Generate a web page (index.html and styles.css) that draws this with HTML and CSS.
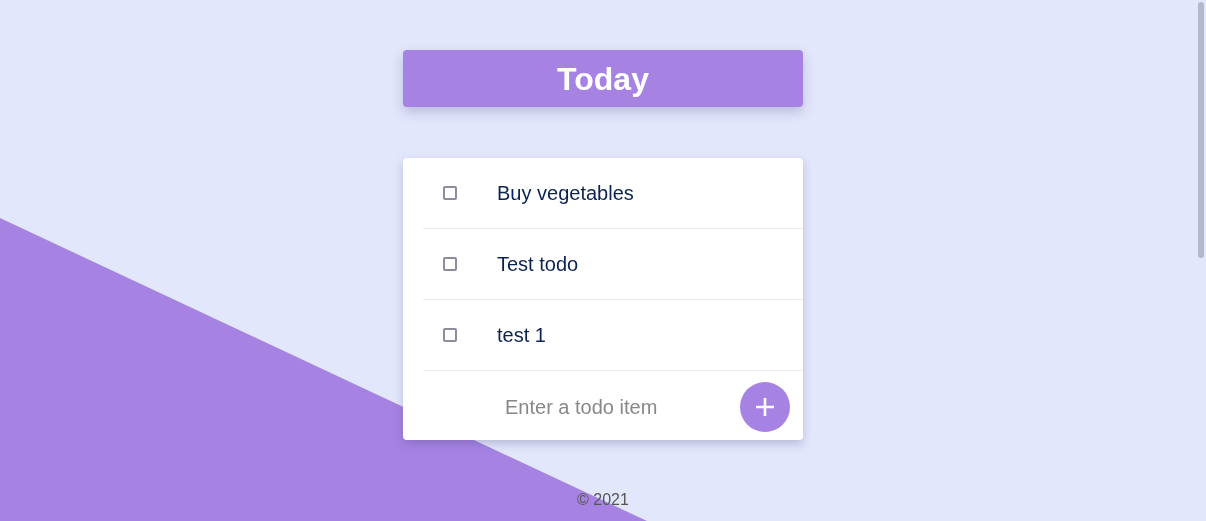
FILE: index.html
```html
<!DOCTYPE html>
<html lang="en">
<head>
<meta charset="utf-8">
<title>Today</title>
<link rel="stylesheet" href="styles.css">
</head>
<body>
<div class="bg-slant"></div>
<main class="app">
  <header class="title-box"><h1 class="title">Today</h1></header>
  <section class="card">
    <ul class="todo-list">
      <li class="todo-item"><span class="check"></span><span class="todo-text">Buy vegetables</span></li>
      <li class="todo-item"><span class="check"></span><span class="todo-text">Test todo</span></li>
      <li class="todo-item"><span class="check"></span><span class="todo-text">test 1</span></li>
    </ul>
    <form class="add-row">
      <input class="todo-input" type="text" placeholder="Enter a todo item">
      <button class="add-btn" type="button" aria-label="Add">
        <svg width="18" height="18" viewBox="0 0 18 18"><path d="M9 0v18M0 9h18" stroke="#fff" stroke-width="2.6" fill="none"/></svg>
      </button>
    </form>
  </section>
  <footer class="footer">© 2021</footer>
</main>
<div class="scroll-thumb"></div>
</body>
</html>
```

FILE: styles.css
```css
html {
  background: #e3e7fc;
}
body {
  margin: 0;
  font-family: "Liberation Sans", Arial, sans-serif;
  color: #0c2352;
}
.bg-slant {
  position: fixed;
  left: 0;
  top: 0;
  width: 100vw;
  height: 100vh;
  background: #a683e3;
  clip-path: polygon(0 41.84%, 53.65% 100%, 0 100%);
  z-index: 0;
}
.scroll-thumb {
  position: fixed;
  top: 2px;
  right: 2px;
  width: 6px;
  height: 256px;
  border-radius: 3px;
  background: #b5b7cb;
  z-index: 2;
}
.app {
  position: relative;
  z-index: 1;
  display: flex;
  flex-direction: column;
  align-items: center;
  padding-top: 50px;
}
.title-box {
  width: 400px;
  height: 57px;
  background: #a683e3;
  border-radius: 4px;
  box-shadow: 0 5px 12px rgba(60, 60, 120, 0.25);
  display: flex;
  align-items: center;
  justify-content: center;
}
.title {
  margin: 0;
  font-size: 32px;
  font-weight: bold;
  color: #fff;
  line-height: 1;
  padding-top: 1px;
}
.card {
  margin-top: 51px;
  width: 400px;
  background: #fff;
  border-radius: 4px;
  box-shadow: 0 4px 10px rgba(60, 60, 110, 0.25);
}
.todo-list {
  list-style: none;
  margin: 0;
  padding: 0 0 0 20px;
}
.todo-item {
  height: 70px;
  border-bottom: 1px solid #ececf0;
  display: flex;
  align-items: center;
  padding-left: 20px;
}
.check {
  width: 10px;
  height: 10px;
  border: 2px solid #8f8b9d;
  border-radius: 2px;
  flex: none;
  margin-top: -1px;
}
.todo-text {
  margin-left: 40px;
  font-size: 20px;
  line-height: 24px;
}
.add-row {
  margin: 0;
  height: 69px;
  display: flex;
  align-items: center;
  padding: 0 13px 0 94px;
}
.todo-input {
  flex: 1;
  min-width: 0;
  border: none;
  outline: none;
  background: transparent;
  font-family: "Liberation Sans", Arial, sans-serif;
  font-size: 20px;
  padding: 4px 0 0 8px;
  color: #333;
}
.todo-input::placeholder {
  color: #888;
}
.add-btn {
  flex: none;
  width: 50px;
  height: 50px;
  border-radius: 50%;
  border: none;
  background: #a683e3;
  display: flex;
  align-items: center;
  justify-content: center;
  padding: 0;
  margin-top: 2px;
}
.footer {
  margin-top: 51px;
  font-size: 16px;
  color: #555;
}
```
